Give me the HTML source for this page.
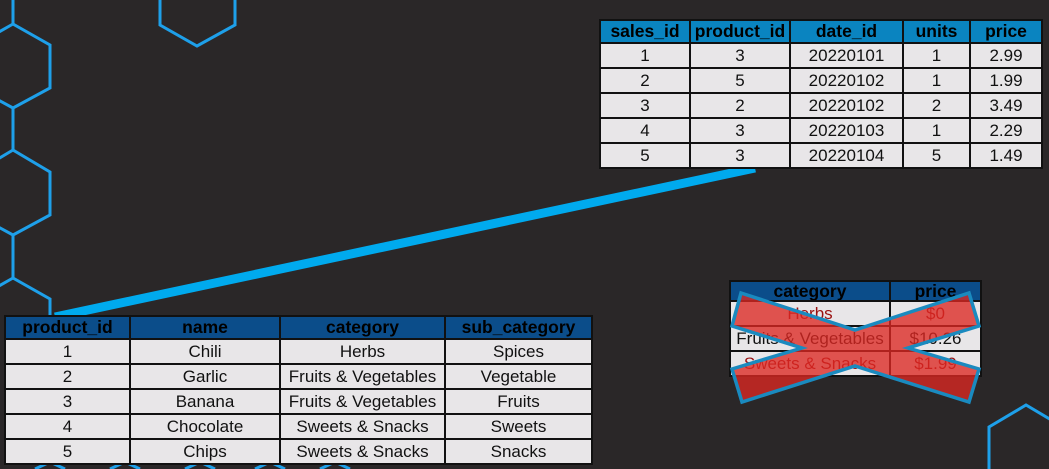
<!DOCTYPE html>
<html><head><style>
html,body{margin:0;padding:0;width:1049px;height:469px;overflow:hidden;background:#2a2728;font-family:"Liberation Sans",Arial,sans-serif}
table{position:absolute;border-collapse:collapse;table-layout:fixed;font-size:17px;background:#e8e6e8;color:#111}
td,th{border:2px solid #111;padding:0;text-align:center;white-space:nowrap;overflow:hidden}
th{font-weight:bold;color:#000;height:21px;line-height:21px;font-size:17.5px}
td{height:22px;padding-top:1px;line-height:22px}
.t1 th{background:#0a84c0}
.t2 th,.t3 th{background:#0b4d8a}
svg{position:absolute;left:0;top:0}
</style></head><body>
<svg width="1049" height="469" style="z-index:0">
<g fill="none" stroke="#1ea0ea" stroke-width="3">
<polyline points="13,0 13,24 50,45 50,88 13,108 -24,88"/>
<polyline points="-24,45 13,24"/>
<polyline points="13,108 13,150 50,172 50,215 13,235 -24,215"/>
<polyline points="-24,172 13,150"/>
<polyline points="13,235 13,278 50,299 50,320"/>
<polyline points="-24,299 13,278"/>
<polyline points="160,0 160,25 197,46 235,25 235,0"/>
<polyline points="989,469 989,427 1026,405 1063,427"/>
<polyline points="35,469 50,462 65,469"/>
<polyline points="110,469 125,462 140,469"/>
<polyline points="185,469 200,462 215,469"/>
<polyline points="255,469 270,462 285,469"/>
<polyline points="320,469 335,462 350,469"/>
</g>
<line x1="55" y1="317" x2="755" y2="168" stroke="#00aaee" stroke-width="9"/>
</svg>
<table class="t1" style="left:599px;top:19px;width:442px">
<colgroup><col style="width:90px"><col style="width:100px"><col style="width:113px"><col style="width:67px"><col style="width:72px"></colgroup>
<tr><th>sales_id</th><th>product_id</th><th>date_id</th><th>units</th><th>price</th></tr>
<tr><td>1</td><td>3</td><td>20220101</td><td>1</td><td>2.99</td></tr>
<tr><td>2</td><td>5</td><td>20220102</td><td>1</td><td>1.99</td></tr>
<tr><td>3</td><td>2</td><td>20220102</td><td>2</td><td>3.49</td></tr>
<tr><td>4</td><td>3</td><td>20220103</td><td>1</td><td>2.29</td></tr>
<tr><td>5</td><td>3</td><td>20220104</td><td>5</td><td>1.49</td></tr>
</table>
<table class="t2" style="left:4px;top:315px;width:587px">
<colgroup><col style="width:125px"><col style="width:150px"><col style="width:165px"><col style="width:147px"></colgroup>
<tr><th>product_id</th><th>name</th><th>category</th><th>sub_category</th></tr>
<tr><td>1</td><td>Chili</td><td>Herbs</td><td>Spices</td></tr>
<tr><td>2</td><td>Garlic</td><td>Fruits &amp; Vegetables</td><td>Vegetable</td></tr>
<tr><td>3</td><td>Banana</td><td>Fruits &amp; Vegetables</td><td>Fruits</td></tr>
<tr><td>4</td><td>Chocolate</td><td>Sweets &amp; Snacks</td><td>Sweets</td></tr>
<tr><td>5</td><td>Chips</td><td>Sweets &amp; Snacks</td><td>Snacks</td></tr>
</table>
<table class="t3" style="left:729px;top:280px;width:251px">
<colgroup><col style="width:160px"><col style="width:91px"></colgroup>
<tr><th style="height:18px;line-height:18px">category</th><th style="height:18px;line-height:18px">price</th></tr>
<tr><td style="color:#9a1010">Herbs</td><td style="color:#9a1010">$0</td></tr>
<tr><td>Fruits &amp; Vegetables</td><td>$10.26</td></tr>
<tr><td style="color:#9a1010">Sweets &amp; Snacks</td><td style="color:#9a1010">$1.99</td></tr>
</table>
<svg width="1049" height="469" style="z-index:2">
<polygon points="741,293 855,330 969,293 979,326 908,348 979,369 969,402 855,366 742,402 732,369 802,348 732,326" fill="rgba(220,40,35,0.78)" stroke="#1a8abf" stroke-width="3.5" stroke-linejoin="miter"/>
</svg>
</body></html>
